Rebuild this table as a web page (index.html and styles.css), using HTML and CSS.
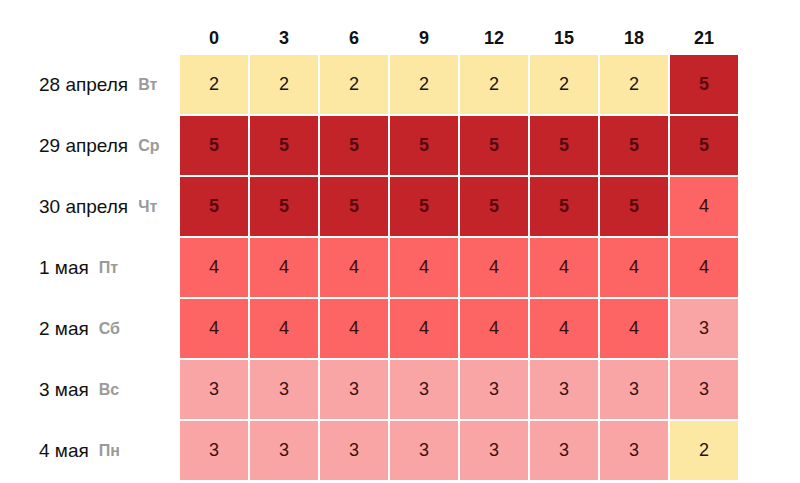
FILE: index.html
```html
<!DOCTYPE html>
<html lang="ru">
<head>
<meta charset="utf-8">
<title>Прогноз</title>
<link rel="stylesheet" href="styles.css">
</head>
<body>
<div class="grid">
  <div class="corner"></div>
  <div class="hour">0</div><div class="hour">3</div><div class="hour">6</div><div class="hour">9</div>
  <div class="hour">12</div><div class="hour">15</div><div class="hour">18</div><div class="hour">21</div>

  <div class="label"><span class="date">28 апреля</span><span class="dow">Вт</span></div>
  <div class="cell l2">2</div><div class="cell l2">2</div><div class="cell l2">2</div><div class="cell l2">2</div>
  <div class="cell l2">2</div><div class="cell l2">2</div><div class="cell l2">2</div><div class="cell l5">5</div>

  <div class="label"><span class="date">29 апреля</span><span class="dow">Ср</span></div>
  <div class="cell l5">5</div><div class="cell l5">5</div><div class="cell l5">5</div><div class="cell l5">5</div>
  <div class="cell l5">5</div><div class="cell l5">5</div><div class="cell l5">5</div><div class="cell l5">5</div>

  <div class="label"><span class="date">30 апреля</span><span class="dow">Чт</span></div>
  <div class="cell l5">5</div><div class="cell l5">5</div><div class="cell l5">5</div><div class="cell l5">5</div>
  <div class="cell l5">5</div><div class="cell l5">5</div><div class="cell l5">5</div><div class="cell l4">4</div>

  <div class="label"><span class="date">1 мая</span><span class="dow">Пт</span></div>
  <div class="cell l4">4</div><div class="cell l4">4</div><div class="cell l4">4</div><div class="cell l4">4</div>
  <div class="cell l4">4</div><div class="cell l4">4</div><div class="cell l4">4</div><div class="cell l4">4</div>

  <div class="label"><span class="date">2 мая</span><span class="dow">Сб</span></div>
  <div class="cell l4">4</div><div class="cell l4">4</div><div class="cell l4">4</div><div class="cell l4">4</div>
  <div class="cell l4">4</div><div class="cell l4">4</div><div class="cell l4">4</div><div class="cell l3">3</div>

  <div class="label"><span class="date">3 мая</span><span class="dow">Вс</span></div>
  <div class="cell l3">3</div><div class="cell l3">3</div><div class="cell l3">3</div><div class="cell l3">3</div>
  <div class="cell l3">3</div><div class="cell l3">3</div><div class="cell l3">3</div><div class="cell l3">3</div>

  <div class="label"><span class="date">4 мая</span><span class="dow">Пн</span></div>
  <div class="cell l3">3</div><div class="cell l3">3</div><div class="cell l3">3</div><div class="cell l3">3</div>
  <div class="cell l3">3</div><div class="cell l3">3</div><div class="cell l3">3</div><div class="cell l2">2</div>
</div>
</body>
</html>
```

FILE: styles.css
```css
html, body {
  margin: 0;
  padding: 0;
  background: #ffffff;
}
body {
  font-family: "Liberation Sans", Arial, sans-serif;
  color: #111111;
}
.grid {
  display: grid;
  grid-template-columns: 178px repeat(8, 68px);
  grid-template-rows: 29px repeat(7, 59px);
  gap: 2px;
  padding-top: 24px;
}
.hour {
  display: flex;
  align-items: center;
  justify-content: center;
  font-weight: bold;
  font-size: 18px;
  color: #111111;
}
.label {
  display: flex;
  align-items: center;
  padding-left: 39px;
  white-space: nowrap;
}
.date {
  font-size: 19px;
  color: #111111;
}
.dow {
  margin-left: 10px;
  font-size: 16px;
  font-weight: bold;
  color: #9a9a9a;
}
.cell {
  display: flex;
  align-items: center;
  justify-content: center;
  font-size: 18px;
}
.l2 { background: #fde8a3; color: #151515; }
.l3 { background: #f9a5a5; color: #3a1010; }
.l4 { background: #fd6464; color: #3a0a0a; }
.l5 { background: #c3242a; color: #5a0a0e; font-weight: bold; }
```
